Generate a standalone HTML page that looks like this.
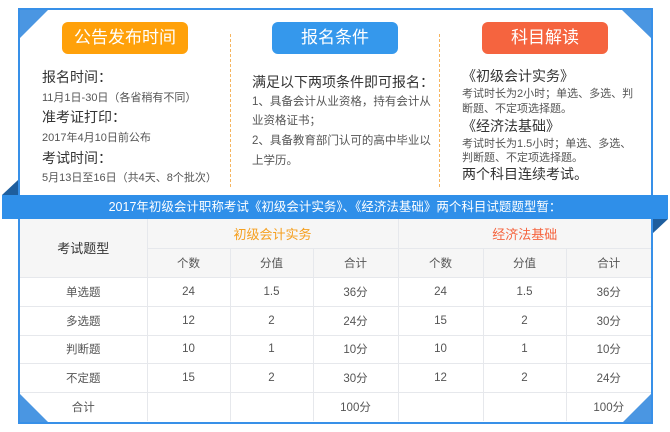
<!DOCTYPE html>
<html><head><meta charset="utf-8"><style>
*{margin:0;padding:0;box-sizing:border-box}
body{width:670px;height:432px;background:#fff;position:relative;overflow:hidden;font-family:"Liberation Sans","Noto Sans CJK SC",sans-serif;color:#333}
.abs{position:absolute}
.panel{left:18px;top:8px;width:635px;height:190px;border:2px solid #3890e8;border-bottom:none}
.btn{top:22px;height:32px;border-radius:6px;color:#fff;font-size:17px;text-align:center;line-height:32px}
.dot{top:34px;height:153px;border-left:1px dashed #f5b560}
.h{font-size:14px;color:#333;white-space:nowrap}
.s{font-size:11px;color:#555;white-space:nowrap}
.m{font-size:11.5px;color:#555;white-space:nowrap}
.banner{left:2px;top:195px;width:666px;height:24px;background:#2f8fe9;color:#fff;font-size:12.5px;text-align:center;line-height:24px}
.tbl{left:18px;top:219px;width:635px;height:205px;border:2px solid #3890e8;border-top:none}
table{position:absolute;left:20px;top:219px;border-collapse:collapse;font-size:11.5px;color:#555}
td{border:1px solid #e6e8ec;text-align:center;padding:0}
.hd td{background:#f6f6f6}
</style></head><body>
<div class="abs panel"></div>
<svg class="abs" style="left:0;top:0" width="670" height="432">
<polygon points="20,10 48,10 20,38" fill="#4a96e2"/>
<polygon points="622,10 651,10 651,38" fill="#4a96e2"/>
<polygon points="2,195 18,195 18,180" fill="#1e5e9e"/>
<polygon points="652,219 668,219 652,234" fill="#1e5e9e"/>
</svg>
<div class="abs btn" style="left:62px;width:126px;background:#ffa10a">公告发布时间</div>
<div class="abs btn" style="left:272px;width:126px;background:#3598ec">报名条件</div>
<div class="abs btn" style="left:482px;width:126px;background:#f5643f">科目解读</div>
<div class="abs dot" style="left:230px"></div>
<div class="abs dot" style="left:439px"></div>
<div class="abs h" style="left:42px;top:67px">报名时间：</div>
<div class="abs s" style="left:42px;top:89px">11月1日-30日（各省稍有不同）</div>
<div class="abs h" style="left:42px;top:107px">准考证打印：</div>
<div class="abs s" style="left:42px;top:129px">2017年4月10日前公布</div>
<div class="abs h" style="left:42px;top:148px">考试时间：</div>
<div class="abs s" style="left:42px;top:169px">5月13日至16日（共4天、8个批次）</div>
<div class="abs h" style="left:252px;top:72px">满足以下两项条件即可报名：</div>
<div class="abs m" style="left:252px;top:93px">1、具备会计从业资格，持有会计从</div>
<div class="abs m" style="left:252px;top:112px">业资格证书；</div>
<div class="abs m" style="left:252px;top:132px">2、具备教育部门认可的高中毕业以</div>
<div class="abs m" style="left:252px;top:152px">上学历。</div>
<div class="abs h" style="left:462px;top:66px">《初级会计实务》</div>
<div class="abs s" style="left:462px;top:85px">考试时长为2小时；单选、多选、判</div>
<div class="abs s" style="left:462px;top:100px">断题、不定项选择题。</div>
<div class="abs h" style="left:462px;top:116px">《经济法基础》</div>
<div class="abs s" style="left:462px;top:135px">考试时长为1.5小时；单选、多选、</div>
<div class="abs s" style="left:462px;top:149px">判断题、不定项选择题。</div>
<div class="abs h" style="left:462px;top:164px">两个科目连续考试。</div>
<div class="abs banner">2017年初级会计职称考试《初级会计实务》、《经济法基础》两个科目试题题型暂：</div>
<div class="abs tbl"></div>
<table>
<colgroup><col style="width:127px"><col style="width:83px"><col style="width:83px"><col style="width:85px"><col style="width:85px"><col style="width:83px"><col style="width:85px"></colgroup>
<tr class="hd" style="height:29px"><td rowspan="2" style="font-size:13px;color:#333;border-left:none;border-top:none">考试题型</td><td colspan="3" style="color:#f5a020;font-size:13px;border-top:none">初级会计实务</td><td colspan="3" style="color:#f5643f;font-size:13px;border-top:none;border-right:none">经济法基础</td></tr>
<tr class="hd" style="height:29px"><td>个数</td><td>分值</td><td>合计</td><td>个数</td><td>分值</td><td style="border-right:none">合计</td></tr>
<tr style="height:29px"><td style="border-left:none">单选题</td><td>24</td><td>1.5</td><td>36分</td><td>24</td><td>1.5</td><td style="border-right:none">36分</td></tr>
<tr style="height:29px"><td style="border-left:none">多选题</td><td>12</td><td>2</td><td>24分</td><td>15</td><td>2</td><td style="border-right:none">30分</td></tr>
<tr style="height:28px"><td style="border-left:none">判断题</td><td>10</td><td>1</td><td>10分</td><td>10</td><td>1</td><td style="border-right:none">10分</td></tr>
<tr style="height:29px"><td style="border-left:none">不定题</td><td>15</td><td>2</td><td>30分</td><td>12</td><td>2</td><td style="border-right:none">24分</td></tr>
<tr style="height:29px"><td style="border-left:none;border-bottom:none">合计</td><td style="border-bottom:none"></td><td style="border-bottom:none"></td><td style="border-bottom:none">100分</td><td style="border-bottom:none"></td><td style="border-bottom:none"></td><td style="border-right:none;border-bottom:none">100分</td></tr>
</table>
<svg class="abs" style="left:0;top:0;pointer-events:none" width="670" height="432">
<polygon points="20,394 20,422 48,422" fill="#4a96e2"/>
<polygon points="651,394 651,422 623,422" fill="#4a96e2"/>
</svg>
</body></html>
